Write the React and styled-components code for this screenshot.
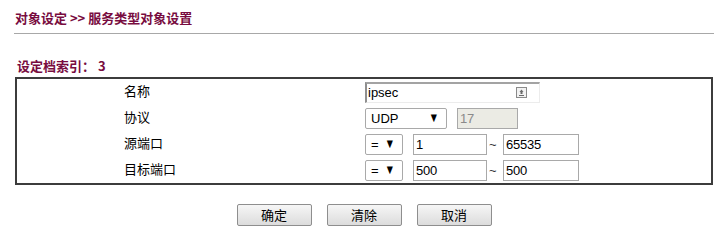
import React from "react";
import styled, { createGlobalStyle } from "styled-components";

const Global = createGlobalStyle`
  html, body { margin: 0; padding: 0; background: #fff; }
  body { font-family: "Liberation Sans", Arial, "Noto Sans CJK SC", sans-serif; font-size: 13px; color: #000; }
`;

const Page = styled.div`
  width: 722px;
  height: 234px;
  box-sizing: border-box;
  padding: 9px 8px 0 14px;
`;

const Title = styled.div`
  font-weight: bold;
  font-size: 13px;
  line-height: 17px;
  color: #780c40;
  font-family: "Noto Sans CJK SC", "Liberation Sans", sans-serif;
  padding-left: 1px;
`;

const Rule = styled.div`
  height: 1px;
  background: #a8a8a8;
  margin-top: 7px;
`;

const Section = styled.div`
  font-weight: bold;
  font-size: 13px;
  line-height: 17px;
  color: #780c40;
  font-family: "Noto Sans CJK SC", "Liberation Sans", sans-serif;
  margin-top: 23px;
  padding-left: 3px;
`;

const Box = styled.div`
  margin-top: 3px;
  margin-left: 1px;
  border: 2px solid #3c3c3c;
  display: grid;
  grid-template-columns: 348px 1fr;
  grid-auto-rows: 26px;
  width: 694px;
`;

const Label = styled.div`
  padding: 0 0 3px 107px;
  display: flex;
  align-items: center;
  font-family: "Noto Sans CJK SC", "Liberation Sans", sans-serif;
  font-size: 13px;
`;

const Field = styled.div`
  display: flex;
  align-items: center;
  gap: 10px;
`;

const TextBox = styled.div`
  box-sizing: border-box;
  width: ${(p) => p.$w}px;
  height: 21px;
  border: 1px solid #a9a9a9;
  background: ${(p) => (p.$disabled ? "#ebebe4" : "#fff")};
  color: ${(p) => (p.$disabled ? "#8a8a8a" : "#000")};
  display: flex;
  align-items: center;
  padding-left: 2px;
  font-size: 13px;
  letter-spacing: -0.2px;
`;

const NameBox = styled.div`
  box-sizing: border-box;
  width: 175px;
  height: 21px;
  border-top: 2px solid #a3a3a3;
  border-left: 2px solid #8f8f8f;
  border-right: 1px solid #ececec;
  border-bottom: 1px solid #ececec;
  display: flex;
  align-items: center;
  justify-content: space-between;
  padding: 0 12px 0 1px;
  font-size: 13px;
`;

const SelectBox = styled.div`
  box-sizing: border-box;
  width: ${(p) => p.$w}px;
  height: 21px;
  border: 1px solid #a9a9a9;
  border-radius: 2px;
  background: #fff;
  display: flex;
  align-items: center;
  justify-content: space-between;
  padding: 0 8px 0 5px;
  font-size: 13px;
`;

const Arrow = styled.span`
  font-size: 10px;
  line-height: 1;
  font-family: "DejaVu Sans", sans-serif;
  transform: scaleX(0.8);
`;

const Tilde = styled.span`
  width: 10px;
  margin: 0 -6px 0 -8px;
  font-size: 13px;
  color: #333;
`;

const Buttons = styled.div`
  display: flex;
  justify-content: center;
  gap: 15px;
  margin-top: 19px;
`;

const Button = styled.div`
  box-sizing: border-box;
  width: 75px;
  height: 22px;
  border: 1px solid #8e8e8e;
  border-radius: 2px;
  background: linear-gradient(#f6f6f6, #dcdcdc);
  display: flex;
  align-items: center;
  justify-content: center;
  padding-bottom: 2px;
  font-family: "Noto Sans CJK SC", "Liberation Sans", sans-serif;
  font-size: 13px;
`;

const KeyIcon = () => (
  <svg width="11" height="11" viewBox="0 0 11 11">
    <rect x="0.5" y="0.5" width="10" height="10" fill="#f2f2f2" stroke="#8a8a8a" />
    <path d="M5.5 2.5 L7.5 5 L3.5 5 Z" fill="#6a6a6a" />
    <rect x="4.5" y="5" width="2" height="2" fill="#6a6a6a" />
    <rect x="3" y="8" width="5" height="1" fill="#6a6a6a" />
  </svg>
);

export default function App() {
  return (
    <Page>
      <Global />
      <Title>对象设定 &gt;&gt; 服务类型对象设置</Title>
      <Rule />
      <Section>设定档索引： 3</Section>
      <Box>
        <Label>名称</Label>
        <Field>
          <NameBox>
            <span>ipsec</span>
            <KeyIcon />
          </NameBox>
        </Field>
        <Label>协议</Label>
        <Field>
          <SelectBox $w={82}>
            <span>UDP</span>
            <Arrow>▼</Arrow>
          </SelectBox>
          <TextBox $w={61} $disabled>17</TextBox>
        </Field>
        <Label>源端口</Label>
        <Field>
          <SelectBox $w={38}>
            <span>=</span>
            <Arrow>▼</Arrow>
          </SelectBox>
          <TextBox $w={74}>1</TextBox>
          <Tilde>~</Tilde>
          <TextBox $w={76}>65535</TextBox>
        </Field>
        <Label>目标端口</Label>
        <Field>
          <SelectBox $w={38}>
            <span>=</span>
            <Arrow>▼</Arrow>
          </SelectBox>
          <TextBox $w={74}>500</TextBox>
          <Tilde>~</Tilde>
          <TextBox $w={76}>500</TextBox>
        </Field>
      </Box>
      <Buttons>
        <Button>确定</Button>
        <Button>清除</Button>
        <Button>取消</Button>
      </Buttons>
    </Page>
  );
}
